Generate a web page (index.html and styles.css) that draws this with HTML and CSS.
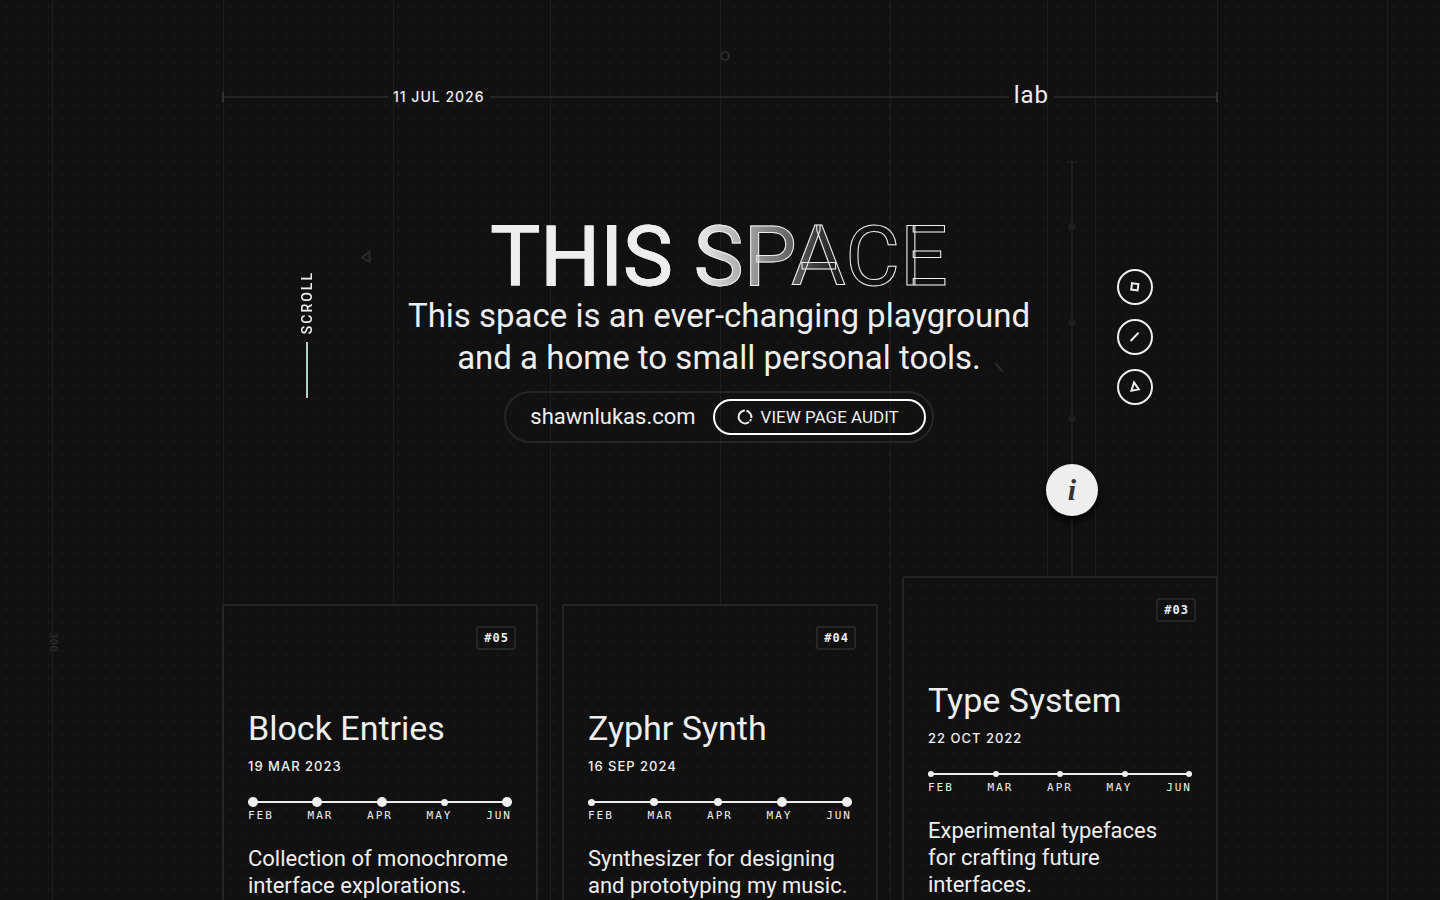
FILE: index.html
```
<!DOCTYPE html>
<html lang="en">
<head>
<meta charset="utf-8">
<meta name="viewport" content="width=device-width, initial-scale=1">
<title>lab</title>
<link rel="stylesheet" href="styles.css">
</head>
<body>
<div class="page">
  <svg class="float float-circle" width="12" height="12" viewBox="0 0 12 12" aria-hidden="true"><circle cx="6" cy="6" r="4"/></svg>
  <svg class="float float-triangle" width="12" height="14" viewBox="0 0 12 14" aria-hidden="true"><path d="M2 7.5 L9.5 2 L9.5 12 Z"/></svg>
  <svg class="float float-slash" width="12" height="12" viewBox="0 0 12 12" aria-hidden="true"><path d="M2 2 L10 10.5"/></svg>
  <span class="ruler">300</span>

  <header class="topbar">
    <span class="rule rule-start"></span>
    <time class="date" datetime="2026-07-11">11 JUL 2026</time>
    <span class="rule rule-mid"></span>
    <a class="brand" href="#">lab</a>
    <span class="rule rule-end"></span>
  </header>

  <section class="hero">
    <div class="scroll"><span class="scroll-text">SCROLL</span><span class="scroll-line"></span></div>
    <div class="intro">
      <h1 class="title">THIS SPACE</h1>
      <p class="lead">This space is an ever-changing playground<br>and a home to small personal tools.</p>
      <div class="pill">
        <a class="site" href="#">shawnlukas.com</a>
        <button class="audit" type="button">
          <svg width="16" height="16" viewBox="0 0 16 16" aria-hidden="true"><g fill="none" stroke="currentColor" stroke-width="2"><path d="M9.4 1.8 A6.4 6.4 0 0 1 14.3 9"/><path d="M14 10.2 A6.4 6.4 0 0 1 12.8 12.2"/><path d="M12 13 A6.4 6.4 0 1 1 7.8 1.6"/></g></svg>
          VIEW PAGE AUDIT
        </button>
      </div>
    </div>
    <div class="rail">
      <span class="knot"></span><span class="knot"></span><span class="knot"></span>
      <button class="info" type="button" aria-label="Information">i</button>
    </div>
    <div class="tools">
      <button class="tool" type="button" aria-label="Square"><svg width="16" height="16" viewBox="0 0 16 16"><path d="M5 4.2 L11.4 5 L10.6 11.4 L4.2 10.6 Z"/></svg></button>
      <button class="tool" type="button" aria-label="Line"><svg width="16" height="16" viewBox="0 0 16 16"><path d="M3.6 12 L11.6 3.6"/></svg></button>
      <button class="tool" type="button" aria-label="Triangle"><svg width="16" height="16" viewBox="0 0 16 16"><path d="M7 3.4 L11.8 10.4 L4.4 11.8 Z"/></svg></button>
    </div>
  </section>

  <main class="cards">
    <article class="card">
      <span class="tag">#05</span>
      <h2 class="name">Block Entries</h2>
      <time class="date" datetime="2023-03-19">19 MAR 2023</time>
      <div class="track"><i class="dot l"></i><i class="dot l"></i><i class="dot l"></i><i class="dot s"></i><i class="dot l"></i></div>
      <div class="months"><span>FEB</span><span>MAR</span><span>APR</span><span>MAY</span><span>JUN</span></div>
      <p class="text">Collection of monochrome<br>interface explorations.</p>
    </article>
    <article class="card">
      <span class="tag">#04</span>
      <h2 class="name">Zyphr Synth</h2>
      <time class="date" datetime="2024-09-16">16 SEP 2024</time>
      <div class="track"><i class="dot s"></i><i class="dot m"></i><i class="dot m"></i><i class="dot l"></i><i class="dot l"></i></div>
      <div class="months"><span>FEB</span><span>MAR</span><span>APR</span><span>MAY</span><span>JUN</span></div>
      <p class="text">Synthesizer for designing<br>and prototyping my music.</p>
    </article>
    <article class="card raised">
      <span class="tag">#03</span>
      <h2 class="name">Type System</h2>
      <time class="date" datetime="2022-10-22">22 OCT 2022</time>
      <div class="track"><i class="dot"></i><i class="dot"></i><i class="dot"></i><i class="dot"></i><i class="dot"></i></div>
      <div class="months"><span>FEB</span><span>MAR</span><span>APR</span><span>MAY</span><span>JUN</span></div>
      <p class="text">Experimental typefaces<br>for crafting future<br>interfaces.</p>
    </article>
  </main>
</div>
</body>
</html>
```
FILE: styles.css
```
:root {
  --bg: #111;
  --ink: #eee;
  --line: #262626;
  --guide: #1e1e1e;
  --mono: "DejaVu Sans Mono", monospace;
}
* { box-sizing: border-box; }
body {
  margin: 0;
  background: var(--bg) conic-gradient(from 0deg at 2px 2px, transparent 270deg, #191919 0) 6px 6px / 14px 14px;
  color: var(--ink);
  font-family: Roboto, "Liberation Sans", sans-serif;
}
a { color: inherit; text-decoration: none; }
button { margin: 0; padding: 0; background: none; color: inherit; font: inherit; cursor: pointer; }

.page {
  --g: linear-gradient(var(--guide), var(--guide));
  position: relative;
  height: 100vh;
  overflow: hidden;
  padding: 81px 24px 0;
  background:
    var(--g) calc(50% - 668px) 0 / 1px 100% no-repeat,
    var(--g) calc(50% - 497px) 0 / 1px 100% no-repeat,
    var(--g) calc(50% - 327px) 0 / 1px 100% no-repeat,
    var(--g) calc(50% - 170px) 0 / 1px 100% no-repeat,
    var(--g) 50% 0 / 1px 100% no-repeat,
    var(--g) calc(50% + 170px) 0 / 1px 100% no-repeat,
    var(--g) calc(50% + 327px) 0 / 1px 100% no-repeat,
    var(--g) calc(50% + 375px) 0 / 1px 100% no-repeat,
    var(--g) calc(50% + 497px) 0 / 1px 100% no-repeat,
    var(--g) calc(50% + 667px) 0 / 1px 100% no-repeat;
}

.float { position: absolute; fill: none; stroke: #2a2a2a; stroke-width: 2; }
.float-circle { top: 50px; left: calc(50% - 1px); }
.float-triangle { top: 250px; left: calc(50% - 360px); }
.float-slash { top: 361px; left: calc(50% + 273px); }
.ruler {
  position: absolute;
  top: 632px;
  left: calc(50% - 673px);
  writing-mode: vertical-rl;
  font: 11px/12px var(--mono);
  color: #303030;
}

.topbar, .hero, .cards { max-width: 996px; margin: 0 auto; }
.topbar { display: flex; align-items: center; gap: 5px; height: 32px; }
.rule { height: 10px; background: linear-gradient(var(--line), var(--line)) 0 50% / 100% 2px no-repeat; }
.rule-start { width: calc(100% / 6); border-left: 2px solid #333; }
.rule-end { width: calc(100% / 6 - 2px); border-right: 2px solid #333; }
.rule-mid { flex: 1; }
.date { font: 500 13px/16px Inter, sans-serif; letter-spacing: 1px; }
.topbar .date { font-size: 14px; }
.brand { font-size: 24px; line-height: 28px; padding-bottom: 4px; letter-spacing: 1px; }

.hero { display: grid; grid-template-columns: 170px 1fr 52px 120px; height: 463px; }
.scroll { display: flex; flex-direction: column; align-items: center; gap: 8px; padding-top: 158px; }
.scroll-text { writing-mode: vertical-rl; transform: rotate(180deg); font-size: 14px; font-weight: 500; line-height: 16px; letter-spacing: 2px; }
.scroll-line { width: 2px; height: 56px; background: #b3d0c8; }

.intro { display: flex; flex-direction: column; align-items: center; padding-top: 102px; text-align: center; }
.title {
  margin: 0 0 -2px;
  padding-top: 2px;
  font-size: 84px;
  font-weight: 400;
  line-height: 80px;
  background: linear-gradient(90deg, var(--ink) 45%, transparent 78%);
  -webkit-background-clip: text;
  background-clip: text;
  color: transparent;
  -webkit-text-stroke: 1px var(--ink);
}
.lead { margin: 0; font-size: 33px; line-height: 42px; white-space: nowrap; }
.pill { display: flex; align-items: center; gap: 17px; height: 52px; margin-top: 12px; padding: 0 6px 0 24px; border: 2px solid var(--line); border-radius: 26px; }
.site { font-size: 22px; line-height: 28px; }
.audit { display: flex; align-items: center; gap: 8px; height: 36px; padding: 0 25px 0 22px; border: 2px solid #fff; border-radius: 18px; font-size: 17px; font-weight: 400; }

.rail { display: flex; flex-direction: column; align-items: center; margin-top: 48px; gap: 88px; padding-top: 62px;
  background:
    linear-gradient(var(--guide), var(--guide)) 50% 0 / 10px 2px no-repeat,
    linear-gradient(var(--guide), var(--guide)) 50% 0 / 2px 100% no-repeat; }
.knot { width: 8px; height: 8px; border-radius: 50%; background: var(--guide); }
.info { width: 52px; height: 52px; flex: none; margin-top: -47px; border: 0; border-radius: 50%; background: var(--ink); color: #333; box-shadow: 0 4px 8px #000; font: italic bold 30px/52px "Liberation Serif", serif; }

.tools { display: flex; flex-direction: column; gap: 14px; padding: 156px 0 0 19px; }
.tool { display: grid; place-items: center; width: 36px; height: 36px; border: 2px solid var(--ink); border-radius: 50%; }
.tool svg { fill: none; stroke: currentColor; stroke-width: 2; }

.cards { display: grid; grid-template-columns: repeat(3, 1fr); gap: 24px; align-items: start; }
.card {
  display: flex;
  flex-direction: column;
  min-height: 420px;
  margin-top: 28px;
  padding: 20px 24px;
  border: 2px solid var(--line);
  border-radius: 3px;
  background: var(--bg) conic-gradient(from 0deg at 2px 2px, transparent 270deg, #191919 0) 6px 6px / 14px 14px;
}
.raised { margin-top: 0; }
.tag { align-self: flex-end; margin-right: -4px; padding: 2px 5px 2px 6px; border: 2px solid var(--line); border-radius: 3px; font: bold 12px/16px var(--mono); letter-spacing: 1px; }
.name { margin: 58px 0 10px; font-size: 34px; font-weight: 400; line-height: 40px; }
.track { display: flex; align-items: center; justify-content: space-between; height: 10px; margin-top: 23px; background: linear-gradient(var(--ink), var(--ink)) 0 50% / 100% 2px no-repeat; }
.dot { width: 6px; height: 6px; border-radius: 50%; background: var(--ink); }
.dot.s { width: 7px; height: 7px; }
.dot.m { width: 8px; height: 8px; }
.dot.l { width: 10px; height: 10px; }
.months { display: flex; justify-content: space-between; font: 11px/12px var(--mono); letter-spacing: 2px; margin-top: 3px; }
.text { margin: 23px 0 0; font-size: 22px; line-height: 27px; }
```
